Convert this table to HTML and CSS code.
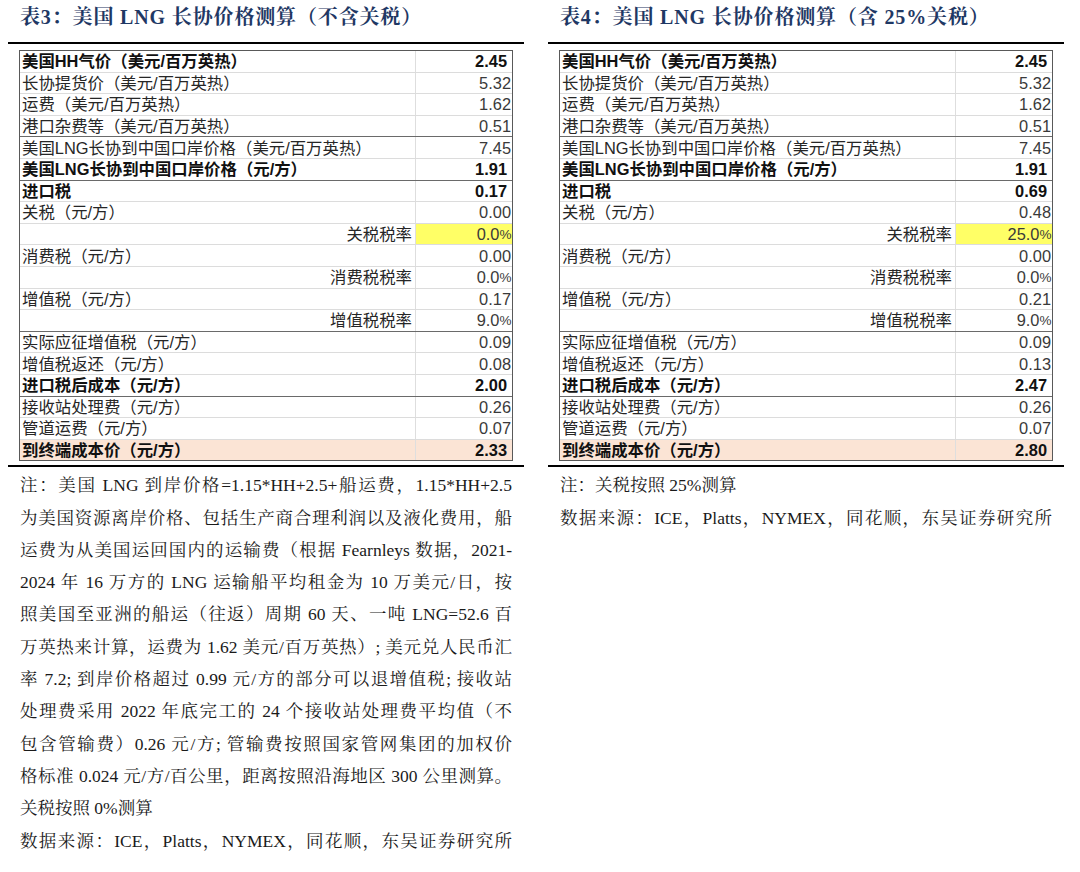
FILE: index.html
```html
<!DOCTYPE html>
<html lang="zh-CN">
<head>
<meta charset="utf-8">
<title>美国 LNG 长协价格测算</title>
<link rel="stylesheet" href="styles.css">
</head>
<body>
<div class="page">
  <section class="panel">
    <h2 class="title">表3：美国 LNG 长协价格测算（不含关税）</h2>
    <div class="rule"></div>
    <div class="tbl">
      <div class="row b"><span class="lab">美国HH气价（美元/百万英热）</span><span class="val">2.45</span></div>
      <div class="row"><span class="lab">长协提货价（美元/百万英热）</span><span class="val">5.32</span></div>
      <div class="row"><span class="lab">运费（美元/百万英热）</span><span class="val">1.62</span></div>
      <div class="row"><span class="lab">港口杂费等（美元/百万英热）</span><span class="val">0.51</span></div>
      <div class="row grp"><span class="lab">美国LNG长协到中国口岸价格（美元/百万英热）</span><span class="val">7.45</span></div>
      <div class="row b"><span class="lab">美国LNG长协到中国口岸价格（元/方）</span><span class="val">1.91</span></div>
      <div class="row b grp"><span class="lab">进口税</span><span class="val">0.17</span></div>
      <div class="row"><span class="lab">关税（元/方）</span><span class="val">0.00</span></div>
      <div class="row rate"><span class="lab">关税税率</span><span class="val hl">0.0<span class="pct">%</span></span></div>
      <div class="row"><span class="lab">消费税（元/方）</span><span class="val">0.00</span></div>
      <div class="row rate"><span class="lab">消费税税率</span><span class="val">0.0<span class="pct">%</span></span></div>
      <div class="row"><span class="lab">增值税（元/方）</span><span class="val">0.17</span></div>
      <div class="row rate"><span class="lab">增值税税率</span><span class="val">9.0<span class="pct">%</span></span></div>
      <div class="row grp"><span class="lab">实际应征增值税（元/方）</span><span class="val">0.09</span></div>
      <div class="row"><span class="lab">增值税返还（元/方）</span><span class="val">0.08</span></div>
      <div class="row b"><span class="lab">进口税后成本（元/方）</span><span class="val">2.00</span></div>
      <div class="row grp"><span class="lab">接收站处理费（元/方）</span><span class="val">0.26</span></div>
      <div class="row"><span class="lab">管道运费（元/方）</span><span class="val">0.07</span></div>
      <div class="row b total"><span class="lab">到终端成本价（元/方）</span><span class="val">2.33</span></div>
    </div>
    <div class="rule bottom"></div>
    <div class="notes">
      <div class="ln j">注：美国 LNG 到岸价格=1.15*HH+2.5+船运费，1.15*HH+2.5</div>
      <div class="ln j">为美国资源离岸价格、包括生产商合理利润以及液化费用，船</div>
      <div class="ln j">运费为从美国运回国内的运输费（根据 Fearnleys 数据，2021-</div>
      <div class="ln j">2024 年 16 万方的 LNG 运输船平均租金为 10 万美元/日，按</div>
      <div class="ln j">照美国至亚洲的船运（往返）周期 60 天、一吨 LNG=52.6 百</div>
      <div class="ln j">万英热来计算，运费为 1.62 美元/百万英热）; 美元兑人民币汇</div>
      <div class="ln j">率 7.2; 到岸价格超过 0.99 元/方的部分可以退增值税; 接收站</div>
      <div class="ln j">处理费采用 2022 年底完工的 24 个接收站处理费平均值（不</div>
      <div class="ln j">包含管输费）0.26 元/方; 管输费按照国家管网集团的加权价</div>
      <div class="ln j">格标准 0.024 元/方/百公里，距离按照沿海地区 300 公里测算。</div>
      <div class="ln">关税按照 0%测算</div>
      <div class="ln j">数据来源：ICE，Platts，NYMEX，同花顺，东吴证券研究所</div>
    </div>
  </section>

  <section class="panel">
    <h2 class="title">表4：美国 LNG 长协价格测算（含 25%关税）</h2>
    <div class="rule"></div>
    <div class="tbl">
      <div class="row b"><span class="lab">美国HH气价（美元/百万英热）</span><span class="val">2.45</span></div>
      <div class="row"><span class="lab">长协提货价（美元/百万英热）</span><span class="val">5.32</span></div>
      <div class="row"><span class="lab">运费（美元/百万英热）</span><span class="val">1.62</span></div>
      <div class="row"><span class="lab">港口杂费等（美元/百万英热）</span><span class="val">0.51</span></div>
      <div class="row grp"><span class="lab">美国LNG长协到中国口岸价格（美元/百万英热）</span><span class="val">7.45</span></div>
      <div class="row b"><span class="lab">美国LNG长协到中国口岸价格（元/方）</span><span class="val">1.91</span></div>
      <div class="row b grp"><span class="lab">进口税</span><span class="val">0.69</span></div>
      <div class="row"><span class="lab">关税（元/方）</span><span class="val">0.48</span></div>
      <div class="row rate"><span class="lab">关税税率</span><span class="val hl">25.0<span class="pct">%</span></span></div>
      <div class="row"><span class="lab">消费税（元/方）</span><span class="val">0.00</span></div>
      <div class="row rate"><span class="lab">消费税税率</span><span class="val">0.0<span class="pct">%</span></span></div>
      <div class="row"><span class="lab">增值税（元/方）</span><span class="val">0.21</span></div>
      <div class="row rate"><span class="lab">增值税税率</span><span class="val">9.0<span class="pct">%</span></span></div>
      <div class="row grp"><span class="lab">实际应征增值税（元/方）</span><span class="val">0.09</span></div>
      <div class="row"><span class="lab">增值税返还（元/方）</span><span class="val">0.13</span></div>
      <div class="row b"><span class="lab">进口税后成本（元/方）</span><span class="val">2.47</span></div>
      <div class="row grp"><span class="lab">接收站处理费（元/方）</span><span class="val">0.26</span></div>
      <div class="row"><span class="lab">管道运费（元/方）</span><span class="val">0.07</span></div>
      <div class="row b total"><span class="lab">到终端成本价（元/方）</span><span class="val">2.80</span></div>
    </div>
    <div class="rule bottom"></div>
    <div class="notes">
      <div class="ln">注：关税按照 25%测算</div>
      <div class="ln j">数据来源：ICE，Platts，NYMEX，同花顺，东吴证券研究所</div>
    </div>
  </section>
</div>
</body>
</html>
```

FILE: styles.css
```css
html, body {
  margin: 0;
  padding: 0;
  background: #ffffff;
}

.page {
  display: flex;
  gap: 24px;
  padding-left: 8px;
  width: 1080px;
  box-sizing: border-box;
}

.panel {
  width: 516px;
  flex: none;
}

.title {
  margin: 0;
  height: 34px;
  line-height: 34px;
  padding-left: 12px;
  font-family: "Liberation Serif", "Noto Serif CJK SC", "Noto Sans CJK SC", serif;
  font-weight: bold;
  font-size: 20px;
  letter-spacing: 0.85px;
  color: #1f3864;
  white-space: nowrap;
}

.rule {
  height: 2px;
  background: #000;
  margin-top: 8px;
}

.rule.bottom {
  margin-top: 4px;
}

.tbl {
  width: 492px;
  margin: 6px 0 0 11px;
  border: 1px solid #595959;
  border-bottom: none;
  font-family: "Liberation Sans", "Noto Sans CJK SC", sans-serif;
  font-size: 16.4px;
  color: #262626;
}

.row {
  display: flex;
  height: 21.6px;
  box-sizing: border-box;
  border-bottom: 1px solid #dcdcdc;
  align-items: center;
  line-height: 20px;
}

.row:last-child {
  border-bottom: 1px solid #595959;
}

.row.grp {
  border-top: 1px solid #6a6a6a;
  margin-top: -1px;
  height: 22.6px;
}

.lab {
  width: 396px;
  flex: none;
  box-sizing: border-box;
  padding-left: 2px;
  align-self: stretch;
  display: flex;
  align-items: center;
  border-right: 1px solid #dedede;
  white-space: nowrap;
}

.rate .lab {
  justify-content: flex-end;
  padding-right: 3px;
}

.val {
  flex: 1;
  align-self: stretch;
  display: flex;
  align-items: center;
  justify-content: flex-end;
  padding-right: 1px;
  color: #3a3a3a;
  white-space: nowrap;
}

.b .lab,
.b .val {
  font-weight: bold;
  color: #111;
}

.b .val {
  padding-right: 5px;
}

.pct {
  font-size: 13.5px;
  letter-spacing: -0.5px;
  margin-top: 2px;
}

.hl {
  background: #ffff66;
}

.total {
  background: #fbe4d5;
}

.notes {
  margin-top: 2px;
  padding: 0 12px;
  font-family: "Liberation Serif", "Noto Serif CJK SC", "Noto Sans CJK SC", serif;
  font-size: 17.5px;
  line-height: 32.3px;
  color: #1a1a1a;
}

.ln {
  white-space: nowrap;
}

.ln.j {
  text-align: justify;
  text-align-last: justify;
}
```
